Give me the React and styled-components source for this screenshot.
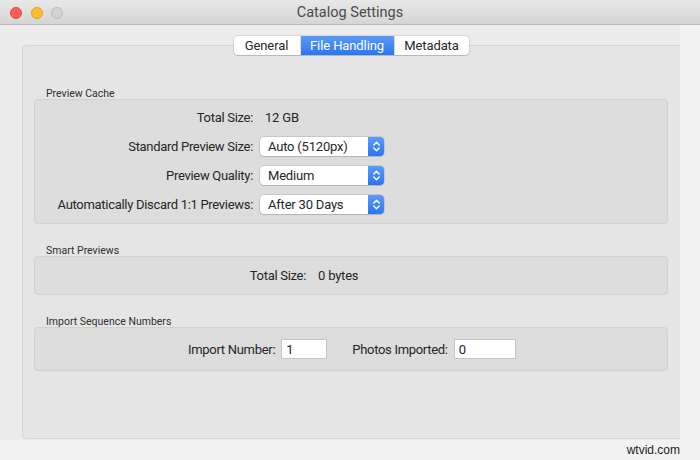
import React from 'react';
import styled, { createGlobalStyle } from 'styled-components';

const GlobalStyle = createGlobalStyle`
  html, body {
    margin: 0;
    padding: 0;
    background: #f2f2f2;
    font-family: Roboto, "Liberation Sans", sans-serif;
    -webkit-font-smoothing: antialiased;
  }
`;

const Stepper = () => (
  <StepperBox>
    <svg width="9" height="13" viewBox="0 0 9 13" fill="none">
      <path d="M1.8 5 L4.5 2.3 L7.2 5" stroke="#fff" strokeWidth="1.4" strokeLinecap="round" strokeLinejoin="round" />
      <path d="M1.8 8 L4.5 10.7 L7.2 8" stroke="#fff" strokeWidth="1.4" strokeLinecap="round" strokeLinejoin="round" />
    </svg>
  </StepperBox>
);

const Popup = ({ children }) => (
  <PopupButton>
    <PopupText>{children}</PopupText>
    <Stepper />
  </PopupButton>
);

const App = () => {
  return (
    <>
      <GlobalStyle />
      <Page>
        <TitleBar>
          <Lights>
            <Light $color="#fc5f57" $border="#e0443e" />
            <Light $color="#fdbc2e" $border="#dea123" />
            <Light $color="#d3d3d3" $border="#bcbcbc" />
          </Lights>
          <Title>Catalog Settings</Title>
        </TitleBar>
        <Body>
          <Tabs>
            <Tab $width={66}>General</Tab>
            <Tab $width={94} $active>File Handling</Tab>
            <Tab $width={75}>Metadata</Tab>
          </Tabs>
          <Panel>
            <SectionLabel>Preview Cache</SectionLabel>
            <GroupBox $pad="8px 0 9px" $labelWidth={218}>
              <Label>Total Size:</Label>
              <Value>12 GB</Value>
              <Label>Standard Preview Size:</Label>
              <Popup>Auto (5120px)</Popup>
              <Label>Preview Quality:</Label>
              <Popup>Medium</Popup>
              <Label>Automatically Discard 1:1 Previews:</Label>
              <Popup>After 30 Days</Popup>
            </GroupBox>

            <SectionLabel>Smart Previews</SectionLabel>
            <GroupBox $pad="9px 0 9px" $labelWidth={271}>
              <Label>Total Size:</Label>
              <Value>0 bytes</Value>
            </GroupBox>

            <SectionLabel>Import Sequence Numbers</SectionLabel>
            <FieldRow>
              <Label>Import Number:</Label>
              <NumberField $width={46}>1</NumberField>
              <Label $gapLeft={25}>Photos Imported:</Label>
              <NumberField $width={62}>0</NumberField>
            </FieldRow>
          </Panel>
        </Body>
        <Credit>wtvid.com</Credit>
      </Page>
    </>
  );
};

export default App;

const Page = styled.div`
  width: 700px;
  height: 460px;
  overflow: hidden;
`;

const TitleBar = styled.div`
  height: 24px;
  position: relative;
  display: flex;
  align-items: center;
  justify-content: center;
  background: linear-gradient(180deg, #e8e8e8 0%, #d5d5d5 100%);
  border-bottom: 1px solid #bdbdbd;
`;

const Lights = styled.div`
  position: absolute;
  left: 10px;
  top: 7px;
  display: flex;
  gap: 8.5px;
`;

const Light = styled.span`
  width: 12px;
  height: 12px;
  border-radius: 50%;
  box-sizing: border-box;
  background: ${p => p.$color};
  border: 1px solid ${p => p.$border};
`;

const Title = styled.div`
  font-size: 14.5px;
  color: #4b4b4b;
`;

const Body = styled.div`
  width: 680px;
  height: 415px;
  box-sizing: border-box;
  background: #ececec;
  display: flex;
  flex-direction: column;
  padding: 11px 0 1px 22px;
`;

const Tabs = styled.div`
  align-self: center;
  position: relative;
  z-index: 1;
  display: flex;
  height: 19px;
  background: #fff;
  border-radius: 4px;
  box-shadow: 0 0 0 0.5px rgba(0, 0, 0, 0.18), 0 1px 1px rgba(0, 0, 0, 0.12);
  overflow: hidden;
`;

const Tab = styled.div`
  width: ${p => p.$width}px;
  box-sizing: border-box;
  display: flex;
  align-items: center;
  justify-content: center;
  font-size: 13px;
  letter-spacing: -0.1px;
  color: ${p => (p.$active ? '#fff' : '#262626')};
  background: ${p => (p.$active ? 'linear-gradient(180deg, #5a9cf8 0%, #2c75ee 100%)' : 'transparent')};
  & + & {
    border-left: 1px solid ${p => (p.$active ? '#2c75ee' : '#dcdcdc')};
  }
`;

const Panel = styled.div`
  flex: 1;
  margin-top: -10px;
  padding: 42px 12px 0 11px;
  background: #e5e5e5;
  border: 1px solid #d7d7d7;
  border-right: none;
  border-radius: 4px 0 0 4px;
  display: flex;
  flex-direction: column;
`;

const SectionLabel = styled.div`
  font-size: 10.5px;
  line-height: 12px;
  color: #303030;
  padding-left: 12px;
  margin-bottom: -1px;
`;

const GroupBox = styled.div`
  display: grid;
  grid-template-columns: ${p => p.$labelWidth}px 1fr;
  grid-auto-rows: 19px;
  column-gap: 7px;
  row-gap: 10px;
  align-items: center;
  padding: ${p => p.$pad};
  margin-bottom: 21px;
  background: #dddddd;
  border: 1px solid #d1d1d1;
  border-radius: 4px;
`;

const Label = styled.div`
  font-size: 13px;
  letter-spacing: -0.3px;
  color: #262626;
  text-align: right;
  white-space: nowrap;
  margin-left: ${p => (p.$gapLeft ? `${p.$gapLeft}px` : '0')};
`;

const Value = styled.div`
  font-size: 13px;
  letter-spacing: -0.2px;
  color: #262626;
  padding-left: 5px;
`;

const PopupButton = styled.div`
  width: 124px;
  height: 19px;
  box-sizing: border-box;
  display: flex;
  align-items: stretch;
  background: #fff;
  border-radius: 4px;
  box-shadow: 0 0 0 0.5px rgba(0, 0, 0, 0.2), 0 1px 1px rgba(0, 0, 0, 0.1);
  overflow: hidden;
`;

const PopupText = styled.div`
  flex: 1;
  display: flex;
  align-items: center;
  padding-left: 8px;
  font-size: 13px;
  letter-spacing: -0.2px;
  color: #262626;
`;

const StepperBox = styled.div`
  width: 16px;
  display: flex;
  align-items: center;
  justify-content: center;
  background: linear-gradient(180deg, #5a9cf8 0%, #2c75ee 100%);
`;

const FieldRow = styled.div`
  display: flex;
  align-items: center;
  height: 42px;
  padding-left: 153px;
  background: #dddddd;
  border: 1px solid #d1d1d1;
  border-radius: 4px;
`;

const NumberField = styled.div`
  width: ${p => p.$width}px;
  height: 20px;
  box-sizing: border-box;
  margin-left: 6px;
  padding-left: 4px;
  display: flex;
  align-items: center;
  background: #fff;
  border: 1px solid #c4c4c4;
  font-size: 13px;
  color: #262626;
`;

const Credit = styled.div`
  width: 680px;
  text-align: right;
  font-size: 12px;
  line-height: 20px;
  color: #1e1e1e;
  font-family: "Liberation Sans", Arial, sans-serif;
`;
